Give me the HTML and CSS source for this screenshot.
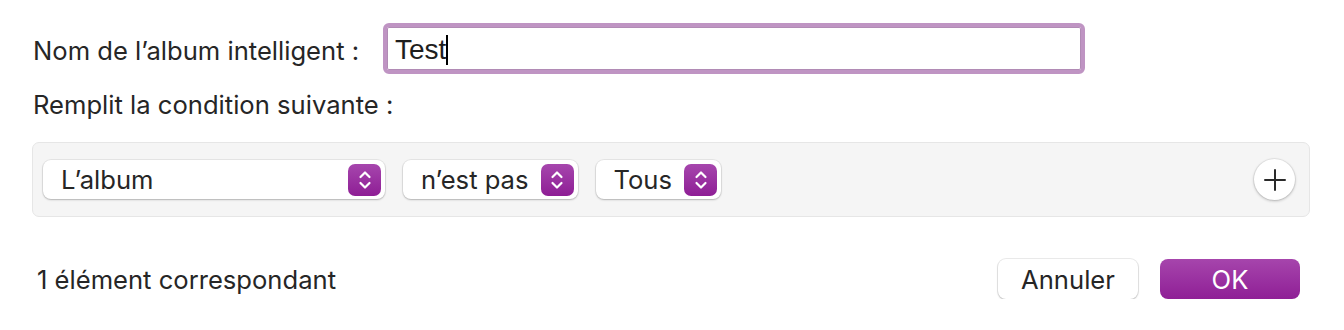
FILE: index.html
```html
<!DOCTYPE html>
<html lang="fr">
<head>
    <meta charset="UTF-8">
    <meta name="viewport" content="width=device-width, initial-scale=1.0">
    <title>Nouvel album intelligent</title>
    <link rel="stylesheet" href="styles.css">
</head>
<body>

    <div class="dialog">
        <div class="name-row">
            <label class="label" for="albumName">Nom de l’album intelligent :</label>
            <div class="field">
                <span class="field-text">Test</span><span class="caret"></span>
            </div>
        </div>

        <div class="hint">Remplit la condition suivante :</div>

        <div class="rules">
            <div class="popup popup-wide">
                <span class="popup-text">L’album</span>
                <span class="stepper">
                    <svg width="14" height="22" viewBox="0 0 14 22"><path d="M2.5 8 L7 3.5 L11.5 8 M2.5 14 L7 18.5 L11.5 14" fill="none" stroke="#fff" stroke-width="2.2" stroke-linecap="round" stroke-linejoin="round"/></svg>
                </span>
            </div>
            <div class="popup">
                <span class="popup-text">n’est pas</span>
                <span class="stepper">
                    <svg width="14" height="22" viewBox="0 0 14 22"><path d="M2.5 8 L7 3.5 L11.5 8 M2.5 14 L7 18.5 L11.5 14" fill="none" stroke="#fff" stroke-width="2.2" stroke-linecap="round" stroke-linejoin="round"/></svg>
                </span>
            </div>
            <div class="popup">
                <span class="popup-text">Tous</span>
                <span class="stepper">
                    <svg width="14" height="22" viewBox="0 0 14 22"><path d="M2.5 8 L7 3.5 L11.5 8 M2.5 14 L7 18.5 L11.5 14" fill="none" stroke="#fff" stroke-width="2.2" stroke-linecap="round" stroke-linejoin="round"/></svg>
                </span>
            </div>
            <button class="add-btn">
                <svg width="22" height="22" viewBox="0 0 22 22"><path d="M11 1 V21 M1 11 H21" stroke="#2a2a2a" stroke-width="2" stroke-linecap="round"/></svg>
            </button>
        </div>

        <div class="footer">
            <span class="count">1 élément correspondant</span>
            <div class="actions">
                <button class="btn">Annuler</button>
                <button class="btn btn-primary">OK</button>
            </div>
        </div>
    </div>

</body>
</html>
```

FILE: styles.css
```css
/* Page */
body {
    margin: 0;
    background: #ffffff;
    color: #262626;
    font-family: Inter, "Liberation Sans", sans-serif;
    font-size: 25.6px;
}

.dialog {
    padding: 23px 34px 0 33px;
}

/* Name row */
.name-row {
    display: flex;
    align-items: center;
    height: 51px;
}

.label {
    width: 350px;
    flex: none;
    padding-top: 3px;
}

.field {
    box-sizing: border-box;
    width: 702px;
    height: 51px;
    border: 4px solid #bf94c3;
    border-radius: 6px;
    background: #fff;
    box-shadow: inset 0 0 0 1px #b18bb5;
    display: flex;
    align-items: center;
    padding-left: 8px;
    padding-top: 3px;
}

.field-text {
    font-family: "Liberation Sans", Arial, sans-serif;
    font-size: 28px;
    color: #1e1e1e;
}

.caret {
    width: 2px;
    height: 30px;
    background: #000;
}

.hint {
    margin-top: 16px;
    height: 30px;
    line-height: 30px;
}

/* Condition panel */
.rules {
    box-sizing: border-box;
    margin-top: 22px;
    margin-left: -1px;
    height: 75px;
    background: #f5f5f5;
    border: 1px solid #e6e6e6;
    border-radius: 7px;
    display: flex;
    align-items: center;
    gap: 18px;
    padding: 0 14px 0 10px;
}

.popup {
    box-sizing: border-box;
    height: 39px;
    background: #fff;
    border-radius: 8px;
    box-shadow: 0 0 0 1px rgba(0, 0, 0, 0.06), 0 1px 2px rgba(0, 0, 0, 0.22);
    display: flex;
    align-items: center;
    padding: 0 4px 0 18px;
}

.popup-wide {
    width: 342px;
}

.popup-text {
    flex: 1;
    margin-right: 12px;
}

.stepper {
    width: 33px;
    height: 32px;
    border-radius: 7px;
    background: linear-gradient(180deg, #a646ad, #8e1e95);
    display: flex;
    align-items: center;
    justify-content: center;
}

.add-btn {
    margin-left: auto;
    width: 41px;
    height: 41px;
    border: none;
    border-radius: 50%;
    background: #fff;
    box-shadow: 0 0 0 1px rgba(0, 0, 0, 0.05), 0 1px 3px rgba(0, 0, 0, 0.25);
    display: flex;
    align-items: center;
    justify-content: center;
    padding: 0;
}

/* Footer */
.footer {
    margin-top: 42px;
    display: flex;
    align-items: center;
    height: 40px;
    padding-right: 10px;
}

.count {
    padding-left: 4px;
}

.actions {
    margin-left: auto;
    display: flex;
    gap: 22px;
}

.btn {
    width: 140px;
    height: 40px;
    border: none;
    border-radius: 8px;
    background: #fff;
    color: #262626;
    font-family: Inter, "Liberation Sans", sans-serif;
    font-size: 25.6px;
    box-shadow: 0 0 0 1px rgba(0, 0, 0, 0.08), 0 1px 2px rgba(0, 0, 0, 0.2);
}

.btn-primary {
    background: linear-gradient(180deg, #a645ac, #8f1f96);
    color: #fff;
    box-shadow: none;
}
```
